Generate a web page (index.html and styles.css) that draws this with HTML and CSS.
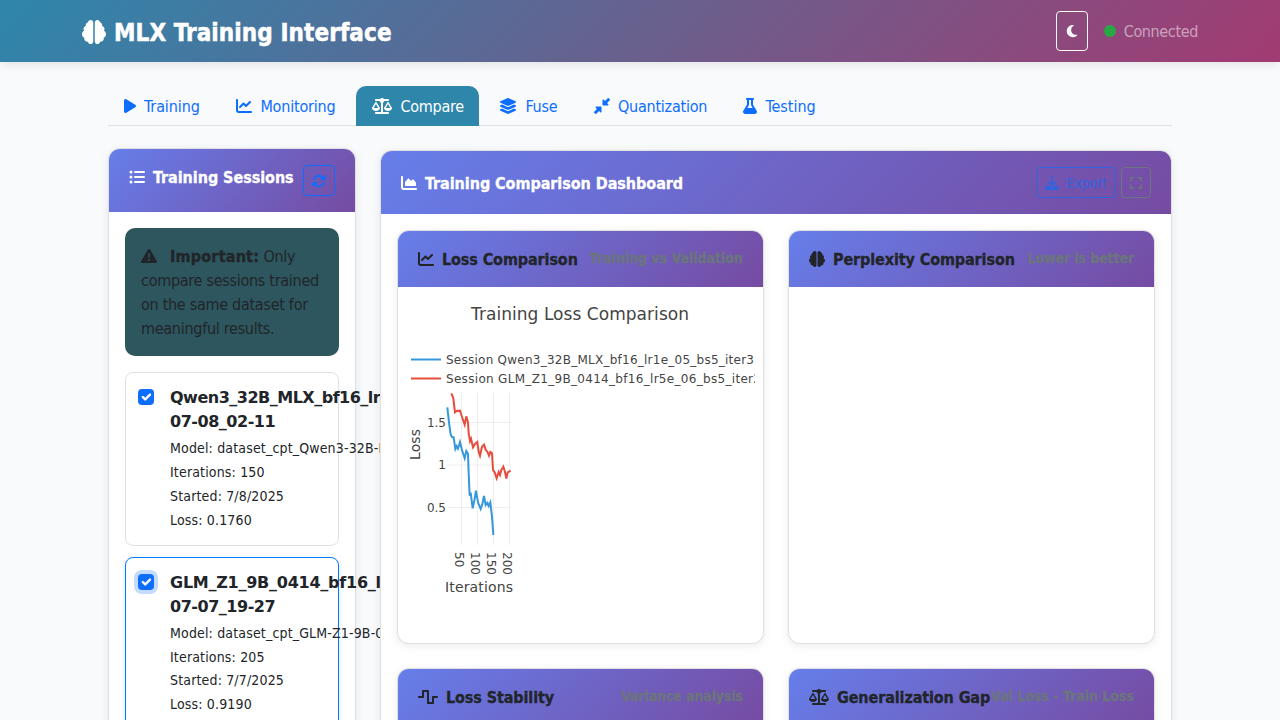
FILE: index.html
```html
<!DOCTYPE html>
<html lang="en">
<head>
<meta charset="utf-8">
<title>MLX Training Interface</title>
<link rel="stylesheet" href="styles.css">
</head>
<body>
<svg class="sprite" aria-hidden="true">
<symbol id="play" viewBox="0 0 384 512"><path d="M73 39c-14.8-9.1-33.4-9.4-48.5-.9S0 62.6 0 80V432c0 17.4 9.4 33.4 24.5 41.9s33.7 8.1 48.5-.9L361 297c14.3-8.7 23-24.2 23-41s-8.7-32.2-23-41L73 39z"/></symbol>
<symbol id="line" viewBox="0 0 512 512"><path d="M64 64c0-17.7-14.3-32-32-32S0 46.3 0 64V400c0 44.2 35.8 80 80 80H480c17.7 0 32-14.3 32-32s-14.3-32-32-32H80c-8.8 0-16-7.2-16-16V64zm406.6 86.6c12.5-12.5 12.5-32.8 0-45.3s-32.8-12.5-45.3 0L320 210.7l-57.4-57.4c-12.5-12.5-32.8-12.5-45.3 0l-112 112c-12.5 12.5-12.5 32.8 0 45.3s32.8 12.5 45.3 0L240 221.3l57.4 57.4c12.5 12.5 32.8 12.5 45.3 0l128-128z"/></symbol>
<symbol id="moon" viewBox="0 0 384 512"><path d="M223.5 32C100 32 0 132.3 0 256S100 480 223.5 480c60.6 0 115.5-24.2 155.8-63.4c5-4.9 6.3-12.5 3.1-18.7s-10.1-9.7-17-8.5c-9.8 1.7-19.8 2.6-30.1 2.6c-96.9 0-175.5-78.8-175.5-176c0-65.8 36-123.1 89.3-153.3c6.1-3.5 9.2-10.5 7.7-17.3s-7.3-11.9-14.3-12.5c-6.3-.5-12.6-.8-19-.8z"/></symbol>
<symbol id="brain" viewBox="0 0 512 512"><path d="M184 0c30.9 0 56 25.1 56 56V456c0 30.9-25.1 56-56 56c-28.9 0-52.7-21.9-55.7-50.1c-5.2 1.4-10.7 2.1-16.3 2.1c-35.3 0-64-28.7-64-64c0-7.4 1.3-14.6 3.6-21.2C21.4 367.4 0 338.2 0 304c0-31.9 18.7-59.5 45.8-72.3C37.1 220.8 32 207 32 192c0-30.7 21.6-56.3 50.4-62.6C80.8 123.9 80 118 80 112c0-29.9 20.6-55.1 48.3-62.1C131.3 21.9 155.1 0 184 0zM328 0c28.9 0 52.6 21.9 55.7 49.9c27.8 7 48.3 32.1 48.3 62.1c0 6-.8 11.9-2.4 17.4c28.8 6.2 50.4 31.9 50.4 62.6c0 15-5.1 28.8-13.8 39.7C493.3 244.5 512 272.1 512 304c0 34.2-21.4 63.4-51.6 74.8c2.3 6.6 3.6 13.8 3.6 21.2c0 35.3-28.7 64-64 64c-5.6 0-11.1-.7-16.3-2.1c-3 28.2-26.8 50.1-55.7 50.1c-30.9 0-56-25.1-56-56V56c0-30.9 25.1-56 56-56z"/></symbol>
<symbol id="scale" viewBox="0 0 640 512"><path d="M384 32H512c17.7 0 32 14.3 32 32s-14.3 32-32 32H398.4c-5.2 25.8-22.9 47.1-46.4 57.3V448H512c17.7 0 32 14.3 32 32s-14.3 32-32 32H320 128c-17.7 0-32-14.3-32-32s14.3-32 32-32H288V153.3c-23.5-10.3-41.2-31.6-46.4-57.3H128c-17.7 0-32-14.3-32-32s14.3-32 32-32H256c14.6-19.4 37.8-32 64-32s49.4 12.6 64 32zm55.6 288H584.4L512 195.8 439.6 320zM512 416c-62.9 0-115.2-34-126-78.9c-2.6-11 1-22.3 6.7-32.1l95.2-163.2c5-8.6 14.2-13.8 24.1-13.8s19.1 5.3 24.1 13.8l95.2 163.2c5.7 9.8 9.3 21.1 6.7 32.1C627.2 382 574.9 416 512 416zM126.8 195.8L54.4 320H199.3L126.8 195.8zM.9 337.1c-2.6-11 1-22.3 6.7-32.1l95.2-163.2c5-8.6 14.2-13.8 24.1-13.8s19.1 5.3 24.1 13.8l95.2 163.2c5.7 9.8 9.3 21.1 6.7 32.1C242 382 189.7 416 126.8 416S11.7 382 .9 337.1z"/></symbol>
<symbol id="layers" viewBox="0 0 576 512"><path d="M264.5 5.2c14.9-6.9 32.1-6.9 47 0l218.6 101c8.5 3.9 13.9 12.4 13.9 21.8s-5.4 17.9-13.9 21.8l-218.6 101c-14.9 6.9-32.1 6.9-47 0L45.9 149.8C37.4 145.8 32 137.3 32 128s5.4-17.9 13.9-21.8L264.5 5.2zM476.9 209.6l53.2 24.6c8.5 3.9 13.9 12.4 13.9 21.8s-5.4 17.9-13.9 21.8l-218.6 101c-14.9 6.9-32.1 6.9-47 0L45.9 277.8C37.4 273.8 32 265.3 32 256s5.4-17.9 13.9-21.8l53.2-24.6 152 70.2c23.4 10.8 50.4 10.8 73.8 0l152-70.2zm-152 198.2l152-70.2 53.2 24.6c8.5 3.9 13.9 12.4 13.9 21.8s-5.4 17.9-13.9 21.8l-218.6 101c-14.9 6.9-32.1 6.9-47 0L45.9 405.8C37.4 401.8 32 393.3 32 384s5.4-17.9 13.9-21.8l53.2-24.6 152 70.2c23.4 10.8 50.4 10.8 73.8 0z"/></symbol>
<symbol id="compress" viewBox="0 0 512 512"><path d="M439 7c9.4-9.4 24.6-9.4 33.9 0l32 32c9.4 9.4 9.4 24.6 0 33.9l-87 87 39 39c6.9 6.9 8.9 17.2 5.2 26.2s-12.5 14.8-22.2 14.8H296c-13.3 0-24-10.7-24-24V72c0-9.7 5.8-18.5 14.8-22.2s19.3-1.7 26.2 5.2l39 39L439 7zM72 272H216c13.3 0 24 10.7 24 24V440c0 9.7-5.8 18.5-14.8 22.2s-19.3 1.7-26.2-5.2l-39-39L73 505c-9.4 9.4-24.6 9.4-33.9 0L7 473c-9.4-9.4-9.4-24.6 0-33.9l87-87L55 313c-6.9-6.9-8.9-17.2-5.2-26.2s12.5-14.8 22.2-14.8z"/></symbol>
<symbol id="flask" viewBox="0 0 448 512"><path d="M288 0H160 128C110.3 0 96 14.3 96 32s14.3 32 32 32V196.8c0 11.8-3.3 23.5-9.5 33.5L10.3 406.2C3.6 417.2 0 429.7 0 442.6C0 480.9 31.1 512 69.4 512H378.6c38.3 0 69.4-31.1 69.4-69.4c0-12.8-3.6-25.4-10.3-36.4L329.5 230.4c-6.2-10.1-9.5-21.7-9.5-33.5V64c17.7 0 32-14.3 32-32s-14.3-32-32-32H288zM192 196.8V64h64V196.8c0 23.7 6.6 46.9 19 67.1L309.5 320h-171L173 263.9c12.4-20.2 19-43.4 19-67.1z"/></symbol>
<symbol id="list" viewBox="0 0 512 512"><circle cx="64" cy="96" r="48"/><circle cx="64" cy="256" r="48"/><circle cx="64" cy="416" r="48"/><rect x="160" y="64" width="352" height="64" rx="32"/><rect x="160" y="224" width="352" height="64" rx="32"/><rect x="160" y="384" width="352" height="64" rx="32"/></symbol>
<symbol id="sync" viewBox="0 0 512 512"><path d="M142.9 142.9c62.2-62.2 162.7-62.5 225.3-1L327 183c-6.9 6.9-8.9 17.2-5.2 26.2s12.5 14.8 22.2 14.8H472c13.3 0 24-10.7 24-24V72c0-9.7-5.8-18.5-14.8-22.2s-19.3-1.7-26.2 5.2L413.4 96.6c-87.6-86.5-228.7-86.2-315.8 1C73.2 122 55.6 150.7 44.8 181.4c-5.9 16.7 2.9 34.9 19.5 40.8s34.9-2.9 40.8-19.5c7.7-21.8 20.2-42.3 37.8-59.8zM16 312V440c0 9.7 5.8 18.5 14.8 22.2s19.3 1.7 26.2-5.2l41.6-41.6c87.6 86.5 228.7 86.2 315.8-1c24.4-24.4 42.1-53.1 52.9-83.7c5.9-16.7-2.9-34.9-19.5-40.8s-34.9 2.9-40.8 19.5c-7.7 21.8-20.2 42.3-37.8 59.8c-62.2 62.2-162.7 62.5-225.3 1L185 329c6.9-6.9 8.9-17.2 5.2-26.2s-12.5-14.8-22.2-14.8H40c-13.3 0-24 10.7-24 24z"/></symbol>
<symbol id="warn" viewBox="0 0 512 512"><path d="M256 32c14.2 0 27.3 7.5 34.5 19.8l216 368c7.3 12.4 7.3 27.7 .2 40.1S486.3 480 472 480H40c-14.3 0-27.6-7.7-34.7-20.1s-7-27.8 .2-40.1l216-368C228.7 39.5 241.8 32 256 32zm0 128c-13.3 0-24 10.7-24 24V296c0 13.3 10.7 24 24 24s24-10.7 24-24V184c0-13.3-10.7-24-24-24zm32 224a32 32 0 1 0 -64 0 32 32 0 1 0 64 0z"/></symbol>
<symbol id="area" viewBox="0 0 512 512"><path d="M64 64c0-17.7-14.3-32-32-32S0 46.3 0 64V400c0 44.2 35.8 80 80 80H480c17.7 0 32-14.3 32-32s-14.3-32-32-32H80c-8.8 0-16-7.2-16-16V64zm96 288H448c17.7 0 32-14.3 32-32V251.8c0-7.6-2.7-15-7.7-20.8l-65.8-76.8c-12.1-14.2-33.7-15-46.9-1.8l-21 21c-10 10-26.4 9.2-35.4-1.6l-39.2-47c-12.6-15.1-35.7-15.4-48.7-.6L135.9 215c-5.1 5.8-7.9 13.3-7.9 21.1v84c0 17.7 14.3 32 32 32z"/></symbol>
<symbol id="wave" viewBox="0 0 640 512"><path d="M128 64c0-17.7 14.3-32 32-32H320c17.7 0 32 14.3 32 32V416h96V256c0-17.7 14.3-32 32-32H608c17.7 0 32 14.3 32 32s-14.3 32-32 32H512V448c0 17.7-14.3 32-32 32H320c-17.7 0-32-14.3-32-32V96H192V256c0 17.7-14.3 32-32 32H32c-17.7 0-32-14.3-32-32s14.3-32 32-32h96V64z"/></symbol>
<symbol id="download" viewBox="0 0 512 512"><path d="M288 32c0-17.7-14.3-32-32-32s-32 14.3-32 32V274.7l-73.4-73.4c-12.5-12.5-32.8-12.5-45.3 0s-12.5 32.8 0 45.3l128 128c12.5 12.5 32.8 12.5 45.3 0l128-128c12.5-12.5 12.5-32.8 0-45.3s-32.8-12.5-45.3 0L288 274.7V32zM64 352c-35.3 0-64 28.7-64 64v32c0 35.3 28.7 64 64 64H448c35.3 0 64-28.7 64-64V416c0-35.3-28.7-64-64-64H346.5l-45.3 45.3c-25 25-65.5 25-90.5 0L165.5 352H64zm368 56a24 24 0 1 1 0 48 24 24 0 1 1 0-48z"/></symbol>
<symbol id="expand" viewBox="0 0 448 512"><path d="M32 32C14.3 32 0 46.3 0 64v96c0 17.7 14.3 32 32 32s32-14.3 32-32V96h64c17.7 0 32-14.3 32-32s-14.3-32-32-32H32zM64 352c0-17.7-14.3-32-32-32s-32 14.3-32 32v96c0 17.7 14.3 32 32 32h96c17.7 0 32-14.3 32-32s-14.3-32-32-32H64V352zM320 32c-17.7 0-32 14.3-32 32s14.3 32 32 32h64v64c0 17.7 14.3 32 32 32s32-14.3 32-32V64c0-17.7-14.3-32-32-32H320zM448 352c0-17.7-14.3-32-32-32s-32 14.3-32 32v64H320c-17.7 0-32 14.3-32 32s14.3 32 32 32h96c17.7 0 32-14.3 32-32V352z"/></symbol>
</svg>

<header class="topbar">
  <div class="brand"><svg class="ic"><use href="#brain"/></svg><span class="brand-name">MLX Training Interface</span></div>
  <div class="status">
    <button class="theme" aria-label="Toggle theme"><svg class="ic w12"><use href="#moon"/></svg></button>
    <span class="dot"></span><span class="status-text">Connected</span>
  </div>
</header>

<main class="page">
  <nav class="tabs">
    <a class="tab tab-training"><svg class="ic w12"><use href="#play"/></svg><span>Training</span></a>
    <a class="tab tab-monitoring"><svg class="ic"><use href="#line"/></svg><span>Monitoring</span></a>
    <a class="tab tab-compare active"><svg class="ic w20"><use href="#scale"/></svg><span>Compare</span></a>
    <a class="tab tab-fuse"><svg class="ic w18"><use href="#layers"/></svg><span>Fuse</span></a>
    <a class="tab tab-quant"><svg class="ic"><use href="#compress"/></svg><span>Quantization</span></a>
    <a class="tab tab-testing"><svg class="ic w14"><use href="#flask"/></svg><span>Testing</span></a>
  </nav>

  <div class="columns">
    <section class="card sessions">
      <div class="card-head sessions-head">
        <h5 class="title"><svg class="ic"><use href="#list"/></svg><span class="t-wide">Training Sessions</span></h5>
        <button class="btn refresh" aria-label="Refresh"><svg class="ic w14"><use href="#sync"/></svg></button>
      </div>
      <div class="sessions-body">
        <div class="alert"><svg class="ic warn"><use href="#warn"/></svg><strong>Important:</strong> Only<br>compare sessions trained<br>on the same dataset for<br>meaningful results.</div>
        <div class="session">
          <span class="check"><svg viewBox="0 0 20 20"><path d="M6 10l3 3 6-6"/></svg></span>
          <div class="session-info">
            <div class="session-name"><span class="name-qwen">Qwen3_32B_MLX_bf16_lr1e_05</span><br><span>07-08_02-11</span></div>
            <div class="meta">Model: dataset_cpt_Qwen3-32B-MLX</div>
            <div class="meta">Iterations: 150</div>
            <div class="meta">Started: 7/8/2025</div>
            <div class="meta">Loss: 0.1760</div>
          </div>
        </div>
        <div class="session selected">
          <span class="check focus"><svg viewBox="0 0 20 20"><path d="M6 10l3 3 6-6"/></svg></span>
          <div class="session-info">
            <div class="session-name"><span class="name-glm">GLM_Z1_9B_0414_bf16_lr5e_06</span><br><span>07-07_19-27</span></div>
            <div class="meta">Model: dataset_cpt_GLM-Z1-9B-0414</div>
            <div class="meta">Iterations: 205</div>
            <div class="meta">Started: 7/7/2025</div>
            <div class="meta">Loss: 0.9190</div>
          </div>
        </div>
      </div>
    </section>

    <section class="card dashboard">
      <div class="card-head dash-head">
        <h5 class="title"><svg class="ic"><use href="#area"/></svg><span class="t-wide">Training Comparison Dashboard</span></h5>
        <div class="tools">
          <button class="btn export"><svg class="ic w14"><use href="#download"/></svg><span>Export</span></button>
          <button class="btn full" aria-label="Fullscreen"><svg class="ic w12"><use href="#expand"/></svg></button>
        </div>
      </div>
      <div class="grid">
        <article class="card panel">
          <div class="card-head panel-head"><h6 class="title"><svg class="ic"><use href="#line"/></svg><span>Loss Comparison</span></h6><small>Training vs Validation</small></div>
          <svg class="plot" viewBox="398 287 365 355" fill="#444">
            <text x="471" y="320" font-size="17" textLength="218">Training Loss Comparison</text>
            <g stroke-width="2"><path d="M411 359.5h30" stroke="#3498db"/><path d="M411 378.5h30" stroke="#e74c3c"/></g>
            <svg x="398" y="340" width="357" height="50" viewBox="398 340 357 50" font-size="12">
              <text x="446" y="364" textLength="308">Session Qwen3_32B_MLX_bf16_lr1e_05_bs5_iter3</text>
              <text x="446" y="383" textLength="315">Session GLM_Z1_9B_0414_bf16_lr5e_06_bs5_iter2</text>
            </svg>
            <path d="M461.5 393v152M477.5 393v152M493.5 393v152M509.5 393v152M447 422.5h64M447 465h64M447 507.5h64" stroke="#eee" fill="none"/>
            <g transform="translate(400 340) scale(.33333)" fill="none" stroke-width="6">
              <path stroke="#3498db" d="M142 202L148 255 152 283 156 291 161 292 166 327 170 318 174 326 180 306 186 330 194 355 199 333 204 342 206 400 209 467 212 458 218 505 223 482 228 452 234 487 242 507 247 493 252 468 257 495 262 489 266 498 271 487 276 530 280 585"/>
              <path stroke="#e74c3c" d="M154 160L160 175 165 217 170 213 180 212 185 228 194 254 199 229 204 247 206 280 210 303 213 296 219 322 225 312 232 306 236 335 240 347 246 320 252 314 257 329 262 335 267 347 271 336 276 340 279 390 284 397 290 415 296 396 300 405 304 390 310 380 315 396 319 416 323 397 332 392"/>
            </g>
            <g font-size="12" text-anchor="end"><text x="446" y="427">1.5</text><text x="446" y="469">1</text><text x="446" y="512">0.5</text></g>
            <g font-size="12"><text transform="translate(455 552) rotate(90)">50</text><text transform="translate(471 552) rotate(90)">100</text><text transform="translate(487 552) rotate(90)">150</text><text transform="translate(503 552) rotate(90)">200</text></g>
            <text x="445" y="592" font-size="14" textLength="68">Iterations</text>
            <text transform="translate(420 460) rotate(-90)" font-size="14" textLength="31">Loss</text>
          </svg>
        </article>
        <article class="card panel">
          <div class="card-head panel-head"><h6 class="title"><svg class="ic"><use href="#brain"/></svg><span>Perplexity Comparison</span></h6><small class="tight">Lower is better</small></div>
        </article>
        <article class="card panel">
          <div class="card-head panel-head"><h6 class="title"><svg class="ic w20"><use href="#wave"/></svg><span>Loss Stability</span></h6><small class="tight">Variance analysis</small></div>
        </article>
        <article class="card panel">
          <div class="card-head panel-head"><h6 class="title"><svg class="ic w20"><use href="#scale"/></svg><span>Generalization Gap</span></h6><small>Val Loss - Train Loss</small></div>
        </article>
      </div>
    </section>
  </div>
</main>
</body>
</html>
```
FILE: styles.css
```css
* { box-sizing: border-box; }
body {
  margin: 0;
  height: 720px;
  overflow: hidden;
  background: #f8fafc;
  color: #212529;
  font: 16px/24px "DejaVu Sans Condensed", "DejaVu Sans", Verdana, sans-serif;
  font-stretch: condensed;
}
h5, h6 { margin: 0; font-size: 16px; }
button { font: inherit; background: none; padding: 0; }
.sprite { display: none; }
.ic { width: 16px; height: 16px; fill: currentColor; flex: none; }
.w12 { width: 12px; }
.w14 { width: 14px; height: 14px; }
.w18 { width: 18px; }
.w20 { width: 20px; }

.topbar {
  height: 62px;
  padding: 0 82px;
  display: flex;
  align-items: center;
  justify-content: space-between;
  background: linear-gradient(135deg, #2e86ab 0%, #a23b72 100%);
  box-shadow: 0 2px 10px rgba(0, 0, 0, .1);
  color: #fff;
}
.brand { display: flex; align-items: center; gap: 8px; font-size: 24px; font-weight: 700; padding-top: 2px; }
.brand .ic { width: 24px; height: 24px; }
.brand-name { letter-spacing: .09px; padding-top: 1px; -webkit-text-stroke: .5px currentColor; }
.status { display: flex; align-items: center; }
.theme {
  width: 32px; height: 40px;
  display: flex; align-items: center; justify-content: center;
  border: 1px solid #f8f9fa; border-radius: 4px; color: #f8f9fa;
}
.theme .ic { height: 14px; }
.dot { width: 12px; height: 12px; border-radius: 50%; background: #28a745; margin: 0 8px 0 16px; }
.status-text { color: rgba(255, 255, 255, .5); letter-spacing: -.36px; padding-top: 2px; }

.page { width: 1064px; margin: 24px auto 0; }
.tabs { display: flex; gap: 4px; height: 40px; border-bottom: 1px solid #dee2e6; }
.tab {
  height: 40px; padding: 0 16px; flex: none;
  display: flex; align-items: center; gap: 8px;
  color: #0d6efd; border-radius: 10px 10px 0 0; letter-spacing: -.24px;
}
.tab span { padding-top: 2px; }
.tab .w14 { height: 16px; }
.tab.active { background: #2e86ab; color: #fff; }
.tab-training { width: 108.4px; letter-spacing: -.1px; }
.tab-monitoring { width: 132px; letter-spacing: -.2px; }
.tab-compare { width: 123px; }
.tab-fuse { width: 90.6px; }
.tab-quant { width: 145.4px; }
.tab-testing { letter-spacing: 0; }

.columns { display: flex; align-items: flex-start; gap: 24px; margin-top: 22px; }
.card {
  background: #fff;
  border: 1px solid rgba(0, 0, 0, .12);
  border-radius: 12px;
  box-shadow: 0 2px 10px rgba(0, 0, 0, .08);
}
.card-head {
  display: flex; justify-content: space-between;
  padding: 16px 20px;
  background: linear-gradient(135deg, #667eea 0%, #764ba2 100%);
  border-radius: 11px 11px 0 0;
  font-weight: 700;
}
.title { display: flex; align-items: center; gap: 8px; white-space: nowrap; height: 24px; letter-spacing: -.11px; }
.title span { padding-top: 2px; -webkit-text-stroke: .3px currentColor; }
.title .t-wide { letter-spacing: -.05px; }
.sessions { width: 248px; height: 900px; }
.sessions-head, .dash-head { height: 63px; color: #fff; }
.sessions-body { padding: 16px; }
.btn {
  height: 31px; display: flex; align-items: center; justify-content: center; gap: 8px;
  border: 1px solid #0d6efd; border-radius: 4px; color: #0d6efd; font-size: 14px;
}
.refresh { width: 32px; flex: none; }
.alert {
  height: 128px; padding: 17px 16px 15px;
  background: #2d565e; border-radius: 10px;
  white-space: nowrap; letter-spacing: -.28px;
}
.alert strong { letter-spacing: .2px; -webkit-text-stroke: .3px currentColor; }
.warn { margin-right: 13px; vertical-align: -2px; }
.session {
  height: 174px; margin-top: 16px; padding: 12px;
  display: flex; gap: 16px;
  border: 1px solid #dee2e6; border-radius: 8px;
}
.session + .session { margin-top: 10.5px; }
.selected { height: 180px; border-color: #007bff; box-shadow: 0 2px 8px rgba(0, 123, 255, .1); }
.check { width: 16px; height: 16px; margin-top: 4px; flex: none; border-radius: 4px; background: #0d6efd; }
.check svg { display: block; width: 16px; height: 16px; fill: none; stroke: #fff; stroke-width: 3; stroke-linecap: round; stroke-linejoin: round; }
.focus { box-shadow: 0 0 0 4px rgba(13, 110, 253, .25); }
.session-info { white-space: nowrap; padding-top: 1px; }
.session-name {
  font-family: "DejaVu Sans", Verdana, sans-serif; font-stretch: normal; font-weight: 700;
  margin-bottom: 3.4px; letter-spacing: -.47px;
}
.name-qwen { letter-spacing: -.5px; }
.name-glm { letter-spacing: -.25px; }
.meta { font-size: 14px; line-height: 23.7px; letter-spacing: .16px; }

.dashboard { position: relative; width: 792px; height: 900px; margin-top: 2px; }
.dash-head { align-items: center; }
.tools { display: flex; gap: 5px; }
.export { width: 80px; font-weight: 400; gap: 7px; letter-spacing: -.1px; opacity: .65; }
.full { width: 30px; color: #6c757d; border-color: #6c757d; }
.full .ic { height: 14px; }
.grid { padding: 16px; display: grid; grid-template-columns: 367px 367px; gap: 24px; }
.panel { height: 414px; }
.panel-head { height: 56px; }
.panel-head small { font-size: 14px; line-height: 21px; padding-top: 1px; color: #6c757d; white-space: nowrap; -webkit-text-stroke: .3px currentColor; }
.panel-head .tight { letter-spacing: -.1px; }
.plot { display: block; width: 365px; height: 355px; font-family: "DejaVu Sans", Verdana, sans-serif; font-stretch: normal; }
```
